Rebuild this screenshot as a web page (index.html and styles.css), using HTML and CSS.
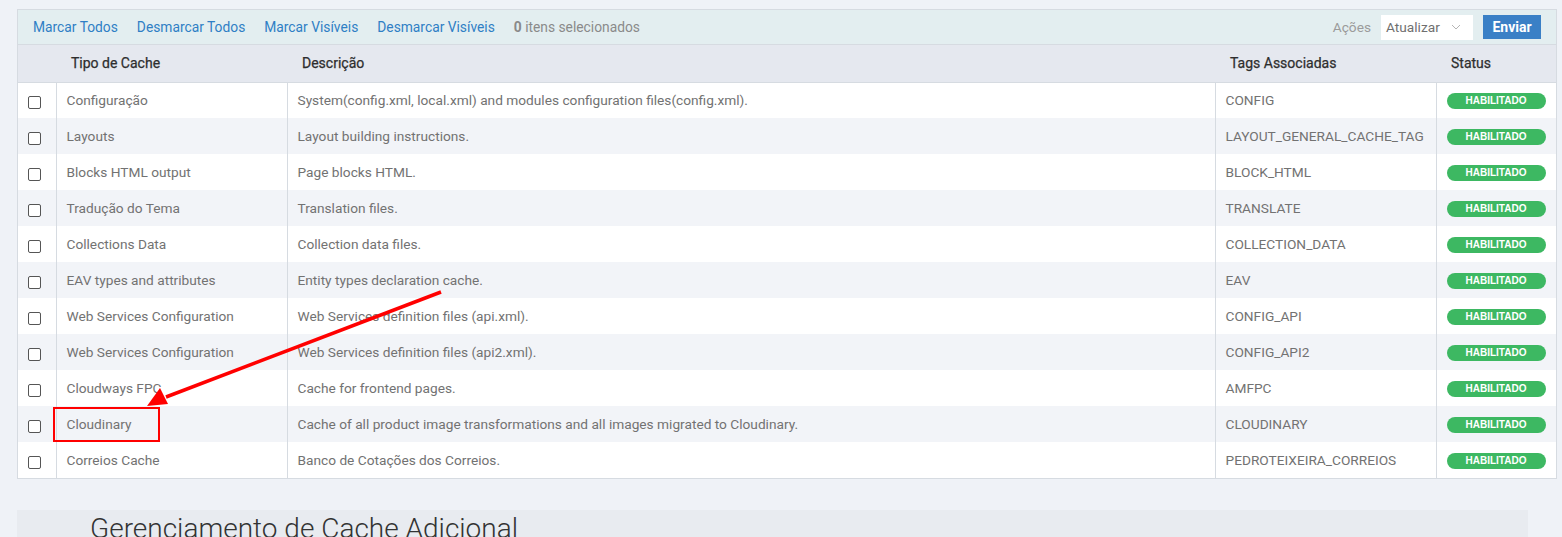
FILE: index.html
```html
<!DOCTYPE html>
<html lang="pt-BR">
<head>
  <meta charset="UTF-8" />
  <title>Gerenciamento de Cache</title>
  <link rel="stylesheet" href="styles.css">
</head>
<body>

  <div class="grid">
    <div class="massaction">
      <div class="mass-links">
        <a href="#">Marcar Todos</a>
        <a href="#">Desmarcar Todos</a>
        <a href="#">Marcar Visíveis</a>
        <a href="#">Desmarcar Visíveis</a>
        <span class="count"><strong>0</strong> itens selecionados</span>
      </div>
      <div class="mass-actions">
        <span class="label">Ações</span>
        <div class="select">Atualizar
          <svg width="10" height="6" viewBox="0 0 10 6"><path d="M1 1l4 4 4-4" fill="none" stroke="#b5b5b5" stroke-width="1"/></svg>
        </div>
        <button class="submit">Enviar</button>
      </div>
    </div>

    <table>
      <thead>
        <tr>
          <th class="col-check"></th>
          <th class="col-type">Tipo de Cache</th>
          <th class="col-desc">Descrição</th>
          <th class="col-tags">Tags Associadas</th>
          <th class="col-status">Status</th>
        </tr>
      </thead>
      <tbody id="rows"></tbody>
    </table>

    <!-- annotation -->
    <svg class="annotation" width="1562" height="537" viewBox="0 0 1562 537">
      <line x1="441" y1="292" x2="166" y2="397" stroke="#f00" stroke-width="3.5"/>
      <polygon points="147,406 160,388 168,404" fill="#f00"/>
      <rect x="54" y="408" width="105" height="33" fill="none" stroke="#f00" stroke-width="2"/>
    </svg>
  </div>

  <div class="panel">
    <h2>Gerenciamento de Cache Adicional</h2>
  </div>

  <script>
    const caches = [
      ["Configuração", "System(config.xml, local.xml) and modules configuration files(config.xml).", "CONFIG"],
      ["Layouts", "Layout building instructions.", "LAYOUT_GENERAL_CACHE_TAG"],
      ["Blocks HTML output", "Page blocks HTML.", "BLOCK_HTML"],
      ["Tradução do Tema", "Translation files.", "TRANSLATE"],
      ["Collections Data", "Collection data files.", "COLLECTION_DATA"],
      ["EAV types and attributes", "Entity types declaration cache.", "EAV"],
      ["Web Services Configuration", "Web Services definition files (api.xml).", "CONFIG_API"],
      ["Web Services Configuration", "Web Services definition files (api2.xml).", "CONFIG_API2"],
      ["Cloudways FPC", "Cache for frontend pages.", "AMFPC"],
      ["Cloudinary", "Cache of all product image transformations and all images migrated to Cloudinary.", "CLOUDINARY"],
      ["Correios Cache", "Banco de Cotações dos Correios.", "PEDROTEIXEIRA_CORREIOS"]
    ];

    const rows = document.getElementById("rows");
    caches.forEach(c => {
      const tr = document.createElement("tr");
      tr.innerHTML = `
        <td class="col-check"><span class="checkbox"></span></td>
        <td>${c[0]}</td>
        <td>${c[1]}</td>
        <td>${c[2]}</td>
        <td><span class="badge">HABILITADO</span></td>
      `;
      rows.appendChild(tr);
    });
  </script>

</body>
</html>
```

FILE: styles.css
```css
body {
  font-family: Roboto, "Liberation Sans", Arial, sans-serif;
  background: #eff2f7;
  margin: 0;
  padding: 9px 0 0 17px;
  font-size: 13.7px;
  color: #727272;
  overflow: hidden;
  height: 528px;
}

.grid {
  width: 1540px;
  border: 1px solid #d6dbe1;
  box-sizing: border-box;
}

.massaction {
  height: 34px;
  background: #e3eef0;
  display: flex;
  align-items: center;
  justify-content: space-between;
  padding: 0 15px 0 15px;
  border-bottom: 1px solid #d6dbe1;
}

.mass-links {
  display: flex;
  gap: 19px;
  align-items: center;
  font-size: 13.8px;
}

.mass-links a {
  color: #2f7fc5;
  text-decoration: none;
}

.count {
  color: #8a8a8a;
}

.count strong {
  color: #8a8a8a;
  font-weight: bold;
}

.mass-actions {
  display: flex;
  align-items: center;
}

.label {
  color: #9b9b9b;
  margin-right: 10px;
}

.select {
  background: white;
  width: 92px;
  height: 25px;
  box-sizing: border-box;
  padding: 0 12px 0 5px;
  display: flex;
  align-items: center;
  justify-content: space-between;
  color: #6f6f6f;
  margin-right: 10px;
}

.submit {
  background: #3a80c6;
  color: white;
  border: none;
  height: 24px;
  width: 58px;
  font-family: inherit;
  font-size: 14px;
  font-weight: bold;
  padding: 0;
}

table {
  width: 100%;
  border-collapse: collapse;
  table-layout: fixed;
}

th {
  background: #e5e8ef;
  height: 37px;
  text-align: left;
  font-weight: normal;
  font-size: 14px;
  color: #2e2e2e;
  padding: 0 15px;
  border-bottom: 1px solid #d6dbe1;
  box-sizing: border-box;
  -webkit-text-stroke: 0.25px #2e2e2e;
}

td {
  height: 36px;
  padding: 0 10px;
  border-left: 1px solid #d6dbe1;
  box-sizing: border-box;
}

td:first-child {
  border-left: none;
}

tbody tr:nth-child(even) td {
  background: #f2f4f8;
}

tbody tr:nth-child(odd) td {
  background: white;
}

.col-check { width: 38px; }
.col-type { width: 231px; }
.col-desc { width: 928px; }
.col-tags { width: 221px; }

td.col-check {
  padding: 0 0 0 10px;
}

.checkbox {
  display: inline-block;
  width: 11px;
  height: 11px;
  border: 1px solid #555;
  border-radius: 2px;
  background: white;
  vertical-align: middle;
  margin-top: 3px;
}

.badge {
  display: inline-block;
  width: 99px;
  height: 16px;
  line-height: 16px;
  border-radius: 8px;
  background: #3db862;
  color: white;
  font-size: 10px;
  font-weight: bold;
  text-align: center;
  font-family: "Liberation Sans", Arial, sans-serif;
}

.annotation {
  position: absolute;
  top: 0;
  left: 0;
  pointer-events: none;
}

.panel {
  margin-top: 31px;
  width: 1511px;
  background: #e8ebf0;
  height: 40px;
  padding-left: 73px;
  box-sizing: border-box;
}

.panel h2 {
  margin: 0;
  padding-top: 2px;
  font-size: 28px;
  font-weight: 300;
  color: #333;
}
```
